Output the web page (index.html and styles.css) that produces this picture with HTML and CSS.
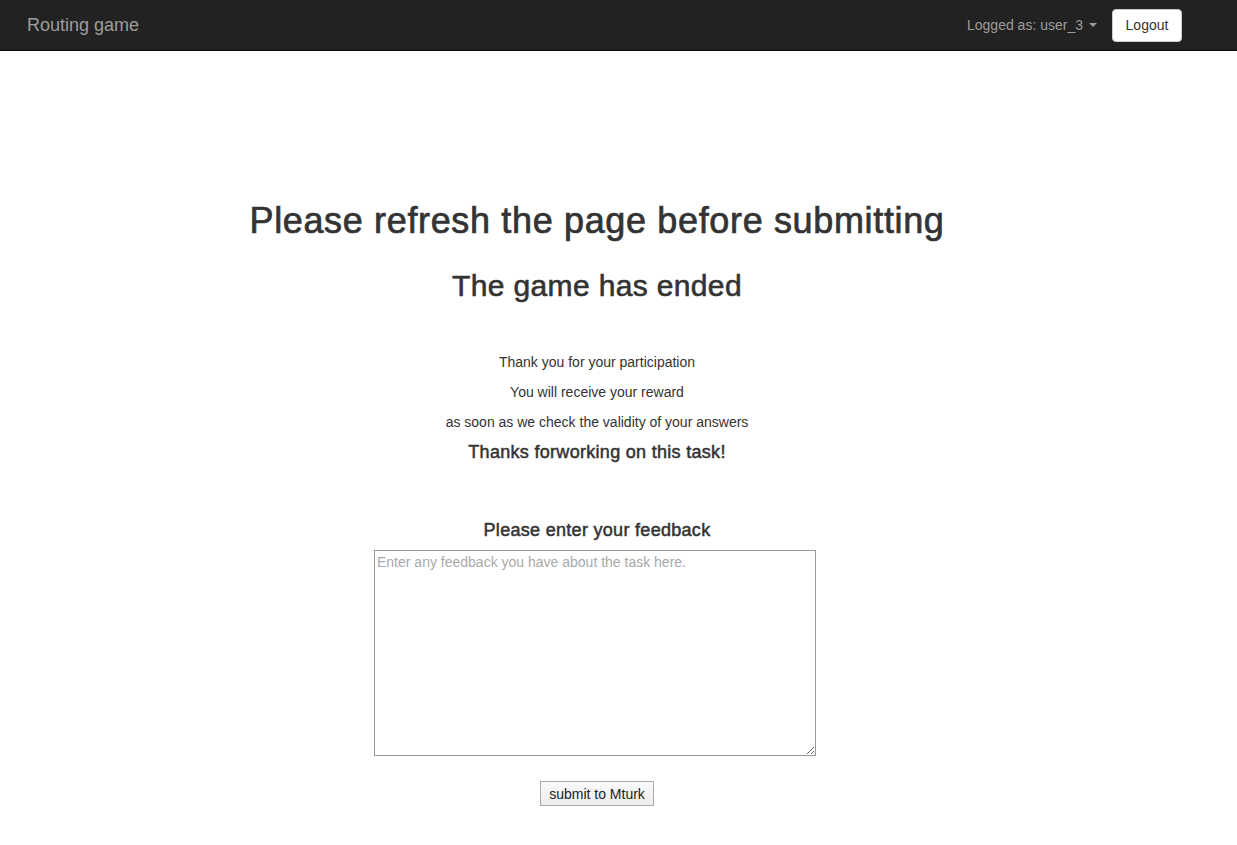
FILE: index.html
```html
<!DOCTYPE html>
<html>
<head>
<meta charset="utf-8">
<title>Routing game</title>
<link rel="stylesheet" href="styles.css">
</head>
<body>
<nav class="navbar">
  <a class="brand" href="#">Routing game</a>
  <div class="nav-right">
    <span class="user">Logged as: user_3 <span class="caret"></span></span>
    <button class="logout">Logout</button>
  </div>
</nav>
<main class="content">
  <h1 class="title">Please refresh the page before submitting</h1>
  <h2 class="subtitle">The game has ended</h2>
  <p class="line first">Thank you for your participation</p>
  <p class="line">You will receive your reward</p>
  <p class="line">as soon as we check the validity of your answers</p>
  <h4 class="thanks">Thanks forworking on this task!</h4>
  <h4 class="fb-label">Please enter your feedback</h4>
  <textarea class="feedback" placeholder="Enter any feedback you have about the task here."></textarea>
  <button class="submit">submit to Mturk</button>
</main>
</body>
</html>
```
FILE: styles.css
```css
* { box-sizing: border-box; }
html, body { margin: 0; padding: 0; }
body {
  font-family: "Liberation Sans", Arial, sans-serif;
  font-size: 14px;
  line-height: 20px;
  color: #333;
  background: #fff;
}
.navbar {
  height: 51px;
  background: #222;
  border-bottom: 1px solid #080808;
  display: flex;
  align-items: center;
  justify-content: space-between;
  padding: 0 55px 0 27px;
}
.brand {
  color: #9d9d9d;
  font-size: 18px;
  text-decoration: none;
  line-height: 20px;
}
.nav-right {
  display: flex;
  align-items: center;
  height: 50px;
}
.user {
  color: #9d9d9d;
  font-size: 14px;
  display: flex;
  align-items: center;
}
.caret {
  display: inline-block;
  width: 0; height: 0;
  margin-left: 6px;
  border-top: 4px solid #9d9d9d;
  border-left: 4px solid transparent;
  border-right: 4px solid transparent;
}
.logout {
  margin-left: 15px;
  height: 33px;
  width: 70px;
  background: #fff;
  border: 1px solid #ccc;
  border-radius: 4px;
  font-family: inherit;
  font-size: 14px;
  color: #333;
  padding: 0;
}
.content {
  display: flex;
  flex-direction: column;
  align-items: center;
  padding-right: 43px;
  text-align: center;
}
.title {
  margin: 150px 0 10px;
  font-size: 36px;
  line-height: 40px;
  font-weight: 400;
  color: #333;
  letter-spacing: 0.65px;
  -webkit-text-stroke: 0.7px #333;
}
.subtitle {
  margin: 18px 0 0;
  font-size: 30px;
  line-height: 33px;
  font-weight: 400;
  color: #333;
  letter-spacing: 0.35px;
  -webkit-text-stroke: 0.6px #333;
}
.line {
  margin: 0 0 10px;
  color: #333;
}
.line.first { margin-top: 50px; }
.thanks {
  margin: 0;
  font-size: 18px;
  line-height: 20px;
  font-weight: 400;
  color: #333;
  letter-spacing: 0.3px;
  -webkit-text-stroke: 0.5px #333;
}
.fb-label {
  margin: 58px 0 10px;
  font-size: 18px;
  line-height: 20px;
  font-weight: 400;
  color: #333;
  letter-spacing: 0.3px;
  -webkit-text-stroke: 0.5px #333;
}
.feedback {
  width: 442px;
  height: 206px;
  border: 1px solid #999;
  padding: 3px 2px 2px;
  font-family: inherit;
  font-size: 14px;
  line-height: 16px;
  resize: both;
  margin-left: -4px;
}
.feedback::placeholder { color: #a9a9a9; }
.submit {
  margin-top: 25px;
  height: 25px;
  padding: 0 8px;
  font-family: inherit;
  font-size: 14px;
  color: #222;
  background: linear-gradient(#fafafa, #ececec);
  border: 1px solid #aaa;
  border-radius: 0;
}
```
